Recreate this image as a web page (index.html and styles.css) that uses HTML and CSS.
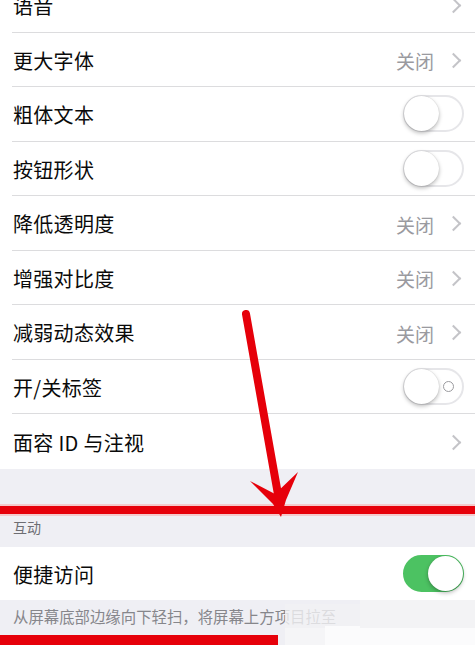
FILE: index.html
```html
<!DOCTYPE html>
<html lang="zh">
<head>
<meta charset="utf-8">
<link rel="stylesheet" href="styles.css">
</head>
<body>
<div class="page">
  <div class="list first">
    <div class="row"><div class="inner"><span class="label">语音</span><span class="acc"><span class="chev"></span></span></div></div>
    <div class="row"><div class="inner"><span class="label">更大字体</span><span class="acc"><span class="val">关闭</span><span class="chev"></span></span></div></div>
    <div class="row"><div class="inner"><span class="label">粗体文本</span><span class="toggle"><span class="knob"></span></span></div></div>
    <div class="row"><div class="inner"><span class="label">按钮形状</span><span class="toggle"><span class="knob"></span></span></div></div>
    <div class="row"><div class="inner"><span class="label">降低透明度</span><span class="acc"><span class="val">关闭</span><span class="chev"></span></span></div></div>
    <div class="row"><div class="inner"><span class="label">增强对比度</span><span class="acc"><span class="val">关闭</span><span class="chev"></span></span></div></div>
    <div class="row"><div class="inner"><span class="label">减弱动态效果</span><span class="acc"><span class="val">关闭</span><span class="chev"></span></span></div></div>
    <div class="row"><div class="inner"><span class="label">开/关标签</span><span class="toggle"><span class="knob"></span><span class="olabel"></span></span></div></div>
    <div class="row last"><div class="inner"><span class="label">面容 ID 与注视</span><span class="acc"><span class="chev"></span></span></div></div>
  </div>
  <div class="section-head">互动</div>
  <div class="list">
    <div class="row last single"><div class="inner"><span class="label">便捷访问</span><span class="toggle on"><span class="knob"></span></span></div></div>
  </div>
  <div class="footer">从屏幕底部边缘向下轻扫，将屏幕上方项目拉至</div>

  <div class="watermark">
    <span class="wm w1"></span>
    <span class="wm w2"></span>
    <span class="wm w3"></span>
    <span class="wm w4"></span>
  </div>

  <svg class="annot" width="475" height="645" viewBox="0 0 475 645">
    <rect x="0" y="504" width="475" height="12" fill="#f7b0b0" opacity="0.6"/>
    <rect x="0" y="506" width="475" height="8" fill="#e6000a"/>
    <line x1="246" y1="314" x2="279" y2="500" stroke="#e6000a" stroke-width="8" stroke-linecap="round"/>
    <polygon points="250,481 275,494 298,472 286,500 281,517 273,504" fill="#e6000a"/>
    <rect x="0" y="635" width="278" height="10" fill="#e6000a"/>
  </svg>
</div>
</body>
</html>
```
FILE: styles.css
```css
html, body {
  margin: 0;
  padding: 0;
}
body {
  width: 475px;
  height: 645px;
  overflow: hidden;
  background: #efeff4;
  font-family: "Noto Sans CJK SC", "Noto Sans", sans-serif;
  color: #0a0a0a;
}
.page {
  position: relative;
  width: 475px;
  height: 645px;
  overflow: hidden;
}
.list {
  background: #fff;
}
.list.first {
  margin-top: -22px;
}
.row {
  padding-left: 12px;
  height: 54.5px;
}
.row.single {
  height: 53px;
}
.inner {
  height: 100%;
  box-sizing: border-box;
  border-bottom: 1px solid #dcdcde;
  display: flex;
  align-items: center;
  justify-content: space-between;
  padding-left: 1px;
  padding-right: 12px;
}
.row.last .inner {
  border-bottom: none;
}
.label {
  font-size: 20px;
  line-height: 1;
  letter-spacing: 0.3px;
  padding-top: 3px;
}
.acc {
  display: flex;
  align-items: center;
  gap: 14px;
}
.val {
  font-size: 19px;
  color: #9a9a9f;
  line-height: 1;
  padding-top: 3px;
}
.chev {
  width: 9px;
  height: 9px;
  border-top: 2px solid #c4c4c8;
  border-right: 2px solid #c4c4c8;
  transform: rotate(45deg);
  margin-right: 4px;
  margin-top: 2px;
}
.toggle {
  position: relative;
  width: 61px;
  height: 37px;
  box-sizing: border-box;
  border-radius: 19px;
  border: 2px solid #e6e6e9;
  background: #fff;
  margin-right: -1px;
}
.toggle .knob {
  position: absolute;
  top: -1px;
  left: -1px;
  width: 35px;
  height: 35px;
  border-radius: 50%;
  background: #fff;
  box-shadow: 0 2px 4px rgba(0,0,0,0.28), 0 0 1px rgba(0,0,0,0.2);
}
.toggle.on {
  background: #4cc262;
  border-color: #4cc262;
}
.toggle.on .knob {
  left: auto;
  right: -1px;
}
.olabel {
  position: absolute;
  right: 8px;
  top: 11px;
  width: 9px;
  height: 9px;
  border-radius: 50%;
  border: 1.5px solid #9a9a9e;
}
.section-head {
  height: 78px;
  box-sizing: border-box;
  display: flex;
  align-items: flex-end;
  padding: 0 0 10px 13px;
  font-size: 14px;
  color: #6d6d72;
}
.footer {
  padding: 5px 0 0 13px;
  font-size: 15.4px;
  color: #86868b;
  white-space: nowrap;
}
.watermark {
  position: absolute;
  left: 285px;
  top: 598px;
  width: 190px;
  height: 47px;
}
.wm {
  position: absolute;
  display: block;
}
.w1 { left: 0; top: 6px; width: 190px; height: 24px; background: #f1f1f4; opacity: 0.8; }
.w2 { left: 40px; top: 28px; width: 150px; height: 19px; background: #fbfbfc; }
.w3 { left: 0; top: 30px; width: 40px; height: 17px; background: #f5f5f7; }
.w4 { left: 75px; top: 2px; width: 115px; height: 28px; background: #f3f3f5; }
.annot {
  position: absolute;
  left: 0;
  top: 0;
}
```
